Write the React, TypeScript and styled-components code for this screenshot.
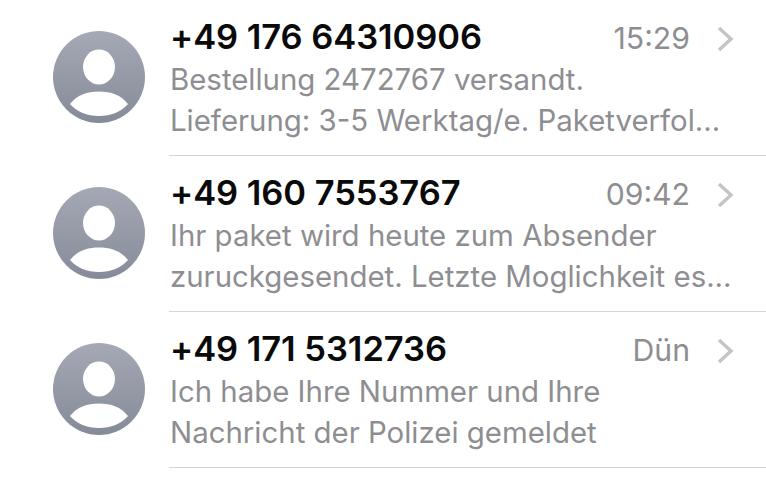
import React from 'react';
import styled, { createGlobalStyle } from 'styled-components';

const GlobalStyle = createGlobalStyle`
  html, body {
    margin: 0;
    padding: 0;
    background: #fff;
    overflow: hidden;
  }
  body {
    font-family: Inter, "Liberation Sans", sans-serif;
  }
`;

const List = styled.div`
  width: 766px;
  height: 480px;
  overflow: hidden;
`;

const Row = styled.div`
  display: flex;
  height: 156px;
`;

const AvatarColumn = styled.div`
  width: 169px;
  flex: none;
  padding: 31px 0 0 53px;
  box-sizing: border-box;
`;

const Content = styled.div`
  flex: 1;
  border-top: 1.5px solid #d6d6d8;
  padding: 16px 0 0 0;
  box-sizing: border-box;
  margin-top: -1px;
  height: 157px;
`;

const Header = styled.div`
  display: flex;
  align-items: center;
  height: 40px;
`;

const Sender = styled.div`
  flex: 1;
  font-size: 34.5px;
  font-weight: 600;
  color: #0a0a0a;
  letter-spacing: -0.05px;
  white-space: nowrap;
  margin-left: 1px;
`;

const Time = styled.div`
  font-size: 30.2px;
  color: #8e8e92;
  white-space: nowrap;
  margin-top: 3px;
`;

const Chevron = styled.svg`
  width: 18px;
  height: 26px;
  margin: 5px 32px 0 26px;
  flex: none;
`;

const PreviewBlock = styled.div`
  padding: 3px 0 0 1px;
`;

const Preview = styled.div`
  font-size: 29.4px;
  line-height: 41px;
  color: #8e8e92;
  white-space: nowrap;
`;

const Avatar = () => (
  <svg width="92" height="92" viewBox="0 0 92 92">
    <defs>
      <linearGradient id="avatarFill" x1="0" y1="0" x2="0" y2="1">
        <stop offset="0" stopColor="#a5a9b5" />
        <stop offset="1" stopColor="#868b99" />
      </linearGradient>
    </defs>
    <circle cx="46" cy="46" r="46" fill="url(#avatarFill)" />
    <ellipse cx="46" cy="36" rx="16" ry="17.5" fill="#fff" />
    <path d="M17 73 C24 64 34 60.5 46 60.5 C58 60.5 68 64 75 73 C68 81 58 85 46 85 C34 85 24 81 17 73 Z" fill="#fff" />
  </svg>
);

const messages = [
  {
    sender: '+49 176 64310906',
    time: '15:29',
    lines: ['Bestellung 2472767 versandt.', 'Lieferung: 3-5 Werktag/e. Paketverfol...'],
  },
  {
    sender: '+49 160 7553767',
    time: '09:42',
    lines: ['Ihr paket wird heute zum Absender', 'zuruckgesendet. Letzte Moglichkeit es...'],
  },
  {
    sender: '+49 171 5312736',
    time: 'Dün',
    lines: ['Ich habe Ihre Nummer und Ihre', 'Nachricht der Polizei gemeldet'],
  },
];

export default function App() {
  return (
    <List>
      <GlobalStyle />
      {messages.map((m) => (
        <Row key={m.sender}>
          <AvatarColumn>
            <Avatar />
          </AvatarColumn>
          <Content>
            <Header>
              <Sender>{m.sender}</Sender>
              <Time>{m.time}</Time>
              <Chevron viewBox="0 0 18 26">
                <path d="M3 2 L15 13 L3 24" fill="none" stroke="#c4c4c7" strokeWidth="3.4" />
              </Chevron>
            </Header>
            <PreviewBlock>
              {m.lines.map((l) => (
                <Preview key={l}>{l}</Preview>
              ))}
            </PreviewBlock>
          </Content>
        </Row>
      ))}
      <Row>
        <AvatarColumn />
        <Content />
      </Row>
    </List>
  );
}
